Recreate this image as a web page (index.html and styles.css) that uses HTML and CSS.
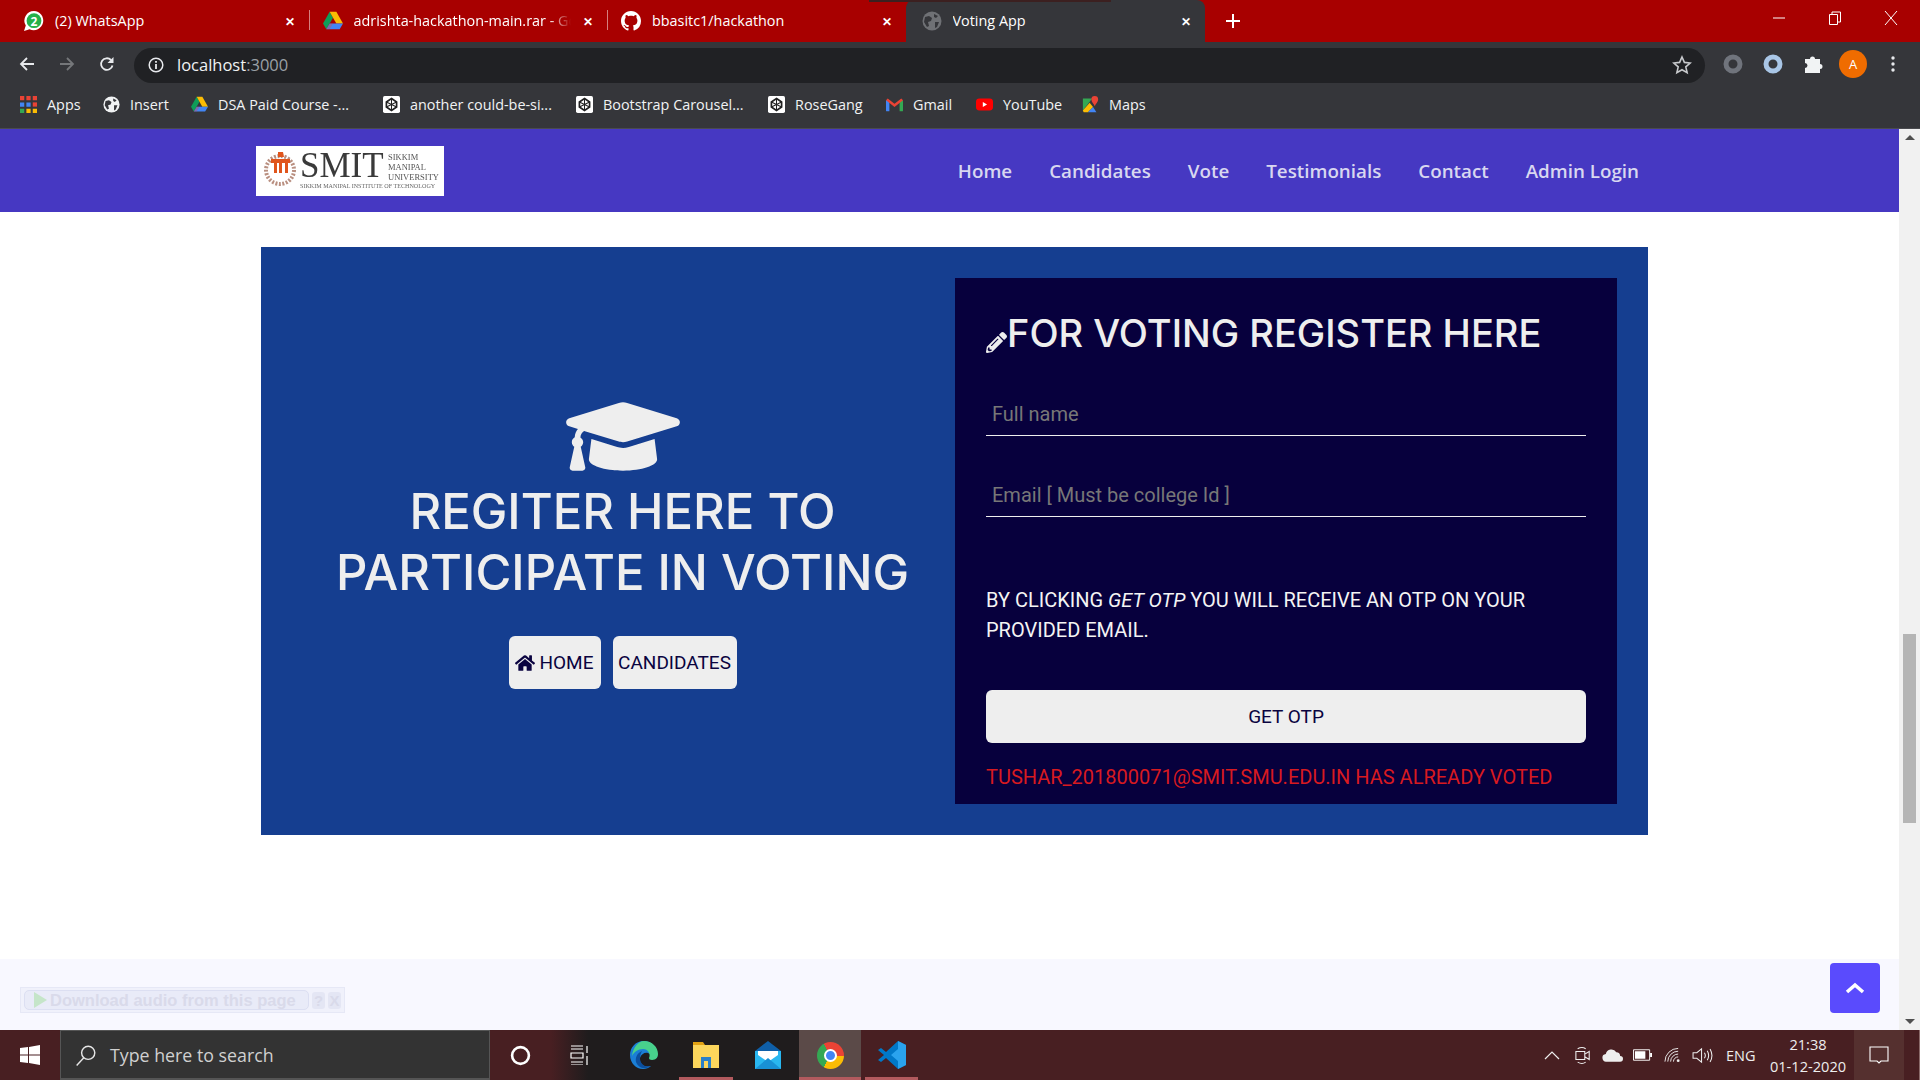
FILE: index.html
```html
<!DOCTYPE html>
<html lang="en">
<head>
  <meta charset="UTF-8" />
  <title>Voting App</title>
  <link rel="stylesheet" href="styles.css">
</head>
<body>
  <svg class="defs" width="0" height="0">
    <symbol id="drive" viewBox="0 0 24 22">
      <path fill="#0f9d58" d="M8 0 0 14l4 7 8-14z"/>
      <path fill="#fbbc04" d="M8 0h8l8 14h-8z"/>
      <path fill="#4285f4" d="M4 21l4-7h16l-4 7z"/>
      <path fill="#ea4335" d="M4 21l4-7h4l-4 7z" opacity=".35"/>
    </symbol>
    <symbol id="pen" viewBox="0 0 20 20">
      <rect width="20" height="20" rx="2" fill="#fff"/>
      <path d="M10 3l6 4v6l-6 4-6-4V7z" fill="none" stroke="#222" stroke-width="2"/>
      <path d="M10 3v14M4 7l12 6M16 7L4 13" stroke="#222" stroke-width="1.2"/>
    </symbol>
    <symbol id="globe" viewBox="0 0 20 20">
      <circle cx="10" cy="10" r="9.5" fill="currentColor"/>
      <path fill="#35363a" d="M3 6l4-1 3 2-1 3-3 1 1 4-2 1-3-5zM12 3l4 2-2 2-2-1zM13 11l4 0-2 5-2 1z"/>
    </symbol>
  </svg>

  <div class="screen">
    <div class="tabstrip">
      <div class="tab">
        <svg class="favicon" viewBox="0 0 20 20"><path fill="#fff" d="M10 0a9.6 9.6 0 0 0-8.2 14.6L0 20l5.6-1.7A9.6 9.6 0 1 0 10 0z"/><circle cx="10" cy="9.7" r="7.4" fill="#25b04a"/></svg>
        <span class="tab-num">2</span>
        <span class="tab-title">(2) WhatsApp</span>
        <span class="tab-close">✕</span>
      </div>
      <div class="tab">
        <svg class="favicon"><use href="#drive"/></svg>
        <span class="tab-title fade">adrishta-hackathon-main.rar - Go</span>
        <span class="tab-close">✕</span>
      </div>
      <div class="tab">
        <svg class="favicon" viewBox="0 0 16 16"><path fill="#fff" d="M8 0C3.58 0 0 3.58 0 8c0 3.54 2.29 6.53 5.47 7.59.4.07.55-.17.55-.38 0-.19-.01-.82-.01-1.49-2.01.37-2.53-.49-2.69-.94-.09-.23-.48-.94-.82-1.13-.28-.15-.68-.52-.01-.53.63-.01 1.08.58 1.23.82.72 1.21 1.87.87 2.33.66.07-.52.28-.87.51-1.07-1.78-.2-3.64-.89-3.64-3.95 0-.87.31-1.59.82-2.15-.08-.2-.36-1.02.08-2.12 0 0 .67-.21 2.2.82.64-.18 1.32-.27 2-.27.68 0 1.36.09 2 .27 1.53-1.04 2.2-.82 2.2-.82.44 1.1.16 1.92.08 2.12.51.56.82 1.27.82 2.15 0 3.07-1.87 3.75-3.65 3.95.29.25.54.73.54 1.48 0 1.07-.01 1.93-.01 2.2 0 .21.15.46.55.38A8.013 8.013 0 0016 8c0-4.42-3.58-8-8-8z"/></svg>
        <span class="tab-title">bbasitc1/hackathon</span>
        <span class="tab-close">✕</span>
      </div>
      <div class="tab active">
        <svg class="favicon dim"><use href="#globe"/></svg>
        <span class="tab-title">Voting App</span>
        <span class="tab-close">✕</span>
      </div>
      <svg class="newtab" viewBox="0 0 16 16"><path d="M8 1v14M1 8h14" stroke="#fff" stroke-width="2"/></svg>
      <div class="winctrls">
        <svg viewBox="0 0 14 14"><path d="M1 7h12" stroke="#fff"/></svg>
        <svg viewBox="0 0 14 14"><path d="M1.5 3.5h8v10h-8zM4 3.5V1h8.500v10h-3" fill="none" stroke="#fff"/></svg>
        <svg viewBox="0 0 14 14"><path d="M1 0l12 14M13 0L1 14" stroke="#fff"/></svg>
      </div>
    </div>

    <div class="toolbar">
      <svg class="tool" viewBox="0 0 16 16"><path d="M15 8H2M8 2 2 8l6 6" fill="none" stroke="#e8eaed" stroke-width="1.8"/></svg>
      <svg class="tool" viewBox="0 0 16 16"><path d="M1 8h13M8 2l6 6-6 6" fill="none" stroke="#75777a" stroke-width="1.8"/></svg>
      <svg class="tool" viewBox="0 0 16 16"><path d="M13.500 9.500A5.800 5.800 0 1 1 12 4" fill="none" stroke="#e8eaed" stroke-width="1.800"/><path d="M14.500 1v6h-6z" fill="#e8eaed"/></svg>
      <div class="omnibox">
        <svg class="info" viewBox="0 0 16 16"><circle cx="8" cy="8" r="6.800" fill="none" stroke="#e8eaed" stroke-width="1.500"/><path d="M8 7v5M8 4v1.800" stroke="#e8eaed" stroke-width="1.800"/></svg>
        <span class="url">localhost<span class="port">:3000</span></span>
        <svg class="star" viewBox="0 0 20 20"><path d="M10 2l2.400 5.400 5.800.6-4.400 3.900 1.300 5.700L10 14.700l-5.100 2.900 1.300-5.700L1.800 8l5.800-.6z" fill="none" stroke="#c8cacd" stroke-width="1.600"/></svg>
      </div>
      <div class="ext-icons">
        <svg viewBox="0 0 20 20"><circle cx="10" cy="10" r="7" fill="none" stroke="#70747c" stroke-width="5"/></svg>
        <svg viewBox="0 0 20 20"><circle cx="10" cy="10" r="7" fill="none" stroke="#a9c6e6" stroke-width="5"/></svg>
        <svg viewBox="0 0 20 20"><path fill="#f1f3f4" d="M2 5h5a2.500 2.500 0 0 1 5 0h5v5a2.500 2.500 0 0 1 0 5v4H2v-5a2.500 2.500 0 0 0 0-5z"/></svg>
        <span class="avatar">A</span>
        <svg viewBox="0 0 20 20"><circle cx="10" cy="4" r="1.700" fill="#e8eaed"/><circle cx="10" cy="10" r="1.700" fill="#e8eaed"/><circle cx="10" cy="16" r="1.700" fill="#e8eaed"/></svg>
      </div>
    </div>

    <div class="bookmarks">
      <a class="bm bm-apps">
        <svg viewBox="0 0 16 16">
          <path fill="#ea4335" d="M0 0h4v4H0zM6 0h4v4H6zM12 0h4v4h-4z"/>
          <path fill="#4285f4" d="M0 6h4v4H0zM6 6h4v4H6z"/><path fill="#ea4335" d="M12 6h4v4h-4z"/>
          <path fill="#34a853" d="M0 12h4v4H0z"/><path fill="#fbbc04" d="M6 12h4v4H6zM12 12h4v4h-4z"/>
        </svg>Apps</a>
      <a class="bm bm-insert"><svg class="light"><use href="#globe"/></svg>Insert</a>
      <a class="bm bm-dsa"><svg><use href="#drive"/></svg>DSA Paid Course -...</a>
      <a class="bm bm-another"><svg><use href="#pen"/></svg>another could-be-si...</a>
      <a class="bm bm-boot"><svg><use href="#pen"/></svg>Bootstrap Carousel...</a>
      <a class="bm bm-rose"><svg><use href="#pen"/></svg>RoseGang</a>
      <a class="bm bm-gmail">
        <svg viewBox="0 0 20 16"><path fill="#4285f4" d="M0 3h4v13H1a1 1 0 0 1-1-1z"/><path fill="#34a853" d="M16 3h4v12a1 1 0 0 1-1 1h-3z"/><path fill="#ea4335" d="M0 3l2-2 8 6 8-6 2 2-10 8z"/></svg>Gmail</a>
      <a class="bm bm-yt">
        <svg viewBox="0 0 20 20"><rect y="3" width="20" height="14" rx="4" fill="#f00"/><path d="M8 7l5 3-5 3z" fill="#fff"/></svg>YouTube</a>
      <a class="bm">
        <svg viewBox="0 0 20 20"><path fill="#34a853" d="M1 3h11L1 17z"/><path fill="#fbbc04" d="M1 17l8-9 4 5-6 6H2z"/><path fill="#4285f4" d="M7 19l6-6 4 6z"/><path fill="#ea4335" d="M15 0a4 4 0 0 1 4 4c0 3-3 5-4 8-1-3-4-5-4-8a4 4 0 0 1 4-4z"/></svg>Maps</a>
    </div>

    <div class="viewport">
      <div class="page">
        <nav class="navbar">
          <div class="logo">
            <svg viewBox="0 0 188 50" width="188" height="50">
              <circle cx="24" cy="24" r="14" fill="none" stroke="#b98f80" stroke-width="4" stroke-dasharray="2 1.500"/>
              <path fill="#e0551c" d="M22 6h5l1 5h-6zM15 13h19v4h-2v10h-3V17h-3v10h-3V17h-2v10h-3V17h-3z"/>
              <text class="logo-big" x="44" y="31">SMIT</text>
              <text class="logo-small" x="132" y="14">SIKKIM</text>
              <text class="logo-small" x="132" y="24">MANIPAL</text>
              <text class="logo-small" x="132" y="34">UNIVERSITY</text>
              <text class="logo-tiny" x="44" y="42">SIKKIM MANIPAL INSTITUTE OF TECHNOLOGY</text>
            </svg>
          </div>
          <ul class="nav-links">
            <li>Home</li>
            <li>Candidates</li>
            <li>Vote</li>
            <li>Testimonials</li>
            <li>Contact</li>
            <li>Admin Login</li>
          </ul>
        </nav>

        <main class="content">
          <section class="panel">
            <div class="intro">
              <svg class="cap" viewBox="0 0 640 512"><path d="M622.34 153.2L343.4 67.5c-15.2-4.67-31.6-4.67-46.79 0L17.66 153.2c-23.54 7.23-23.54 38.36 0 45.59l48.63 14.94c-10.67 13.19-17.23 29.28-17.88 46.9C38.78 266.15 32 276.11 32 288c0 10.78 5.68 19.85 13.86 25.65L20.33 428.53C18.11 438.52 25.71 448 35.94 448h56.11c10.24 0 17.84-9.48 15.62-19.47L82.14 313.65C90.32 307.85 96 298.78 96 288c0-11.57-6.47-21.25-15.66-26.87.76-15.02 8.44-28.3 20.69-36.72L296.6 284.5c9.06 2.78 26.44 6.25 46.79 0l278.95-85.7c23.55-7.24 23.55-38.36 0-45.6zM352.79 315.09c-28.53 8.76-52.84 3.92-65.59 0l-145.02-44.55L128 384c0 35.35 85.96 64 192 64s192-28.65 192-64l-14.18-113.47-145.03 44.56z"/></svg>
              <h1>REGITER HERE TO<br>PARTICIPATE IN VOTING</h1>
              <div class="intro-btns">
                <a class="btn btn-home">
                  <svg viewBox="0 0 576 512"><path d="M280.37 148.26L96 300.11V464a16 16 0 0 0 16 16l112.06-.29a16 16 0 0 0 15.92-16V368a16 16 0 0 1 16-16h64a16 16 0 0 1 16 16v95.64a16 16 0 0 0 16 16.05L464 480a16 16 0 0 0 16-16V300L295.67 148.26a12.19 12.19 0 0 0-15.3 0zM571.6 251.47L488 182.56V44.05a12 12 0 0 0-12-12h-56a12 12 0 0 0-12 12v72.61L318.47 43a48 48 0 0 0-61 0L4.34 251.47a12 12 0 0 0-1.6 16.9l25.5 31A12 12 0 0 0 45.15 301l235.22-193.74a12.19 12.19 0 0 1 15.3 0L530.9 301a12 12 0 0 0 16.9-1.6l25.5-31a12 12 0 0 0-1.7-16.93z"/></svg>
                  HOME</a>
                <a class="btn btn-cand">CANDIDATES</a>
              </div>
            </div>

            <form class="register">
              <h2>
                <svg viewBox="0 0 512 512"><path d="M497.9 142.1l-46.1 46.1c-4.7 4.7-12.3 4.7-17 0l-111-111c-4.7-4.7-4.7-12.3 0-17l46.1-46.1c18.7-18.7 49.1-18.7 67.9 0l60.1 60.1c18.8 18.7 18.8 49.1 0 67.9zM284.2 99.8L21.6 362.4.4 483.9c-2.9 16.4 11.4 30.6 27.8 27.8l121.5-21.3 262.6-262.6c4.7-4.7 4.7-12.3 0-17l-111-111c-4.8-4.7-12.4-4.7-17.1 0zM124.1 339.9c-5.5-5.5-5.5-14.3 0-19.8l154-154c5.5-5.5 14.3-5.5 19.8 0s5.5 14.3 0 19.8l-154 154c-5.5 5.5-14.3 5.5-19.800 0zM88 424h48v36.3l-64.5 11.3-31.1-31.1L51.7 376H88v48z"/></svg>FOR VOTING REGISTER HERE
              </h2>
              <input class="field" type="text" placeholder="Full name">
              <input class="field" type="email" placeholder="Email [ Must be college Id ]">
              <p class="note">BY CLICKING <em>GET OTP</em> YOU WILL RECEIVE AN OTP ON YOUR PROVIDED EMAIL.</p>
              <button class="otp" type="button">GET OTP</button>
              <p class="voted">TUSHAR_201800071@SMIT.SMU.EDU.IN HAS ALREADY VOTED</p>
            </form>
          </section>
        </main>

        <footer class="footer"></footer>

        <div class="audio-bar">
          <span class="audio-main"><i class="play"></i>Download audio from this page</span>
          <span class="audio-mini">?</span>
          <span class="audio-mini">X</span>
        </div>
        <a class="to-top"><svg viewBox="0 0 20 12"><path d="M2 10l8-7 8 7" fill="none" stroke="#fff" stroke-width="3.500"/></svg></a>
      </div>

      <div class="scrollbar">
        <i class="arrow-up"></i>
        <div class="track"><div class="thumb"></div></div>
        <i class="arrow-down"></i>
      </div>
    </div>

    <div class="taskbar">
      <div class="start">
        <svg viewBox="0 0 20 20"><path fill="#fff" d="M0 3l8-1v7.500H0zM9 2l11-2v9.500H9zM0 10.500h8V18l-8-1zM9 10.500h11V20L9 18z"/></svg>
      </div>
      <div class="search">
        <svg viewBox="0 0 20 20"><circle cx="12" cy="8" r="6" fill="none" stroke="#e6e6e6" stroke-width="1.300"/><path d="M8 12.500 1.500 19.500" stroke="#e6e6e6" stroke-width="1.300"/></svg>
        <span>Type here to search</span>
      </div>
      <div class="tb-slot">
        <svg class="tb-cortana" viewBox="0 0 20 20"><circle cx="10" cy="10" r="8" fill="none" stroke="#fff" stroke-width="2.500"/></svg>
      </div>
      <div class="tb-apps">
        <div class="tb-slot">
          <svg class="tb-view" viewBox="0 0 20 20"><path d="M2 1h12M2 4h12M2 8h12v5H2zM2 17h12M2 20h12M18 1v7M18 11v9" fill="none" stroke="#fff" stroke-width="1.200"/></svg>
        </div>
        <div class="tb-slot">
          <svg class="big" viewBox="0 0 30 30"><path fill="#1b7fd6" d="M15 1C6 1 1 8 1 15c0 8 6 14 13 14 3 0 6-1 8-3-8 2-12-3-11-8 1-4 5-6 8-5 3 1 4 3 3 5h6c2-7-3-17-13-17z"/><path fill="#48d18c" d="M15 1c8 0 14 6 14 13 0 3-2 6-6 6-2 0-3-1-3-2 2-4-1-9-6-9-5 0-9 3-11 7C4 8 9 1 15 1z"/><path fill="#0c4f9e" d="M11 18c0 6 5 10 11 8-6 4-13 2-15-4-1-4 1-9 6-11-1 2-2 4-2 7z"/></svg>
        </div>
        <div class="tb-slot running">
          <svg class="big" viewBox="0 0 30 30"><path fill="#e2a213" d="M2 2h10l2 3H2z"/><path fill="#fcd65c" d="M2 5h26v23H2z"/><path fill="#2a80c9" d="M10 17h10v11h-3v-7h-4v7h-3z"/></svg>
        </div>
        <div class="tb-slot">
          <svg class="big" viewBox="0 0 30 30"><path fill="#0f5fa8" d="M15 1 2 11l13 9 13-9z"/><path fill="#29b7f0" d="M2 11h26v18H2z"/><path fill="#fff" d="M5 11h20v4l-10 7-10-7z"/><path fill="#1891d6" d="M2 29 15 18l13 11z"/></svg>
        </div>
        <div class="tb-slot running active">
          <div class="chrome"><i></i></div>
        </div>
      </div>
      <div class="tb-slot running vscode">
        <svg class="big" viewBox="0 0 30 30"><path fill="#0078c8" d="M21 1l8 4v20l-8 4L9 18l-5 4-3-2 6-5-6-5 3-2 5 4z"/><path fill="#2aa3ee" d="M21 1l8 4v20l-8 4zM21 9l-7 6 7 6z"/></svg>
      </div>
      <div class="tray">
        <svg class="t-chev" viewBox="0 0 16 10"><path d="M1 9l7-7 7 7" fill="none" stroke="#eee" stroke-width="1.200"/></svg>
        <svg class="t-meet" viewBox="0 0 18 20"><path d="M1 6h10v9H1zM11 9l5-3v9l-5-3M3 3q5-3 9 0M3 18q5 3 9 0" fill="none" stroke="#eee" stroke-width="1.200"/></svg>
        <svg class="t-cloud" viewBox="0 0 22 14"><path fill="#eee" d="M5 14a4 4 0 0 1-1-8 6 6 0 0 1 11-2 4 4 0 0 1 4 4 3 3 0 0 1 0 6z"/></svg>
        <svg class="t-batt" viewBox="0 0 20 12"><path d="M.5.500h17v11H.5z" fill="none" stroke="#fff"/><path d="M2 2h11v8H2zM18 4h2v4h-2z" fill="#fff"/></svg>
        <svg class="t-wifi" viewBox="0 0 18 16"><path d="M1 15A14 14 0 0 1 15 1M4 15A11 11 0 0 1 15 4M7 15a8 8 0 0 1 8-8M10 15a5 5 0 0 1 5-5" fill="none" stroke="#eee"/><circle cx="15" cy="14" r="1.500" fill="#eee"/></svg>
        <svg class="t-vol" viewBox="0 0 22 18"><path d="M1 6h4l5-4v14l-5-4H1zM13 6q2 3 0 6M16 4q3 5 0 10M19 2q4 7 0 14" fill="none" stroke="#eee" stroke-width="1.100"/></svg>
        <span class="t-lang">ENG</span>
        <span class="t-clock">21:38<br>01-12-2020</span>
        <div class="t-action">
          <svg viewBox="0 0 20 20"><path d="M1 2h18v14h-7l-2 2-2-2H1z" fill="none" stroke="#fff" stroke-width="1.100"/></svg>
        </div>
        <div class="t-peek"></div>
      </div>
    </div>
  </div>
</body>
</html>
```

FILE: styles.css
```css
* {
  box-sizing: border-box;
}
html, body {
  margin: 0;
  height: 100%;
  overflow: hidden;
}
body {
  font-family: "Roboto", "Liberation Sans", sans-serif;
  background-color: #fff;
}
.defs {
  position: absolute;
}
.screen {
  width: 1920px;
  height: 1080px;
  display: flex;
  flex-direction: column;
}

/* browser tabs */
.tabstrip {
  height: 42px;
  background-color: #a80000;
  display: flex;
  align-items: center;
  padding-left: 10px;
  color: #fff;
  font-family: "Open Sans", "Noto Sans", sans-serif;
  font-size: 14px;
  flex: none;
  position: relative;
}
.tab {
  width: 298.500px;
  height: 42px;
  display: flex;
  align-items: center;
  padding: 0 12px 0 14px;
  position: relative;
}
.tab + .tab::before {
  content: "";
  position: absolute;
  left: 0;
  top: 10px;
  height: 20px;
  border-left: 1px solid #d5807f;
}
.tab.active {
  background-color: #35363a;
  border-radius: 8px 8px 0 0;
  width: 299px;
  padding-left: 16px;
}
.tab.active::before {
  display: none;
}
.tab.active::after {
  content: "";
  position: absolute;
  left: -37px;
  top: 0;
  width: 242px;
  height: 2px;
  background-color: #3c2020;
}
.favicon {
  width: 20px;
  height: 20px;
  flex: none;
  margin-right: 11px;
}
.favicon.dim {
  color: #6f7175;
}
.tab-num {
  position: absolute;
  left: 14px;
  width: 20px;
  text-align: center;
  font-size: 12px;
  font-weight: 700;
  color: #fff;
}
.tab-title {
  flex: 1;
  white-space: nowrap;
  overflow: hidden;
  font-size: 14.400px;
  margin-bottom: 2px;
}
.tab-title.fade {
  -webkit-mask-image: linear-gradient(to right, #000 90%, transparent);
  mask-image: linear-gradient(to right, #000 90%, transparent);
}
.tab-close {
  width: 14px;
  margin-left: 10px;
  font-size: 12px;
  text-align: center;
  font-weight: 700;
}
.newtab {
  width: 16px;
  height: 16px;
  margin-left: 20px;
}
.winctrls {
  margin-left: auto;
  display: flex;
  gap: 42px;
  padding-right: 22px;
  padding-bottom: 6px;
}
.winctrls svg {
  width: 14px;
  height: 14px;
}

/* toolbar */
.toolbar {
  height: 41px;
  background-color: #35363a;
  display: flex;
  align-items: center;
  padding-left: 19px;
  flex: none;
}
.tool {
  width: 16px;
  height: 16px;
  margin-right: 24px;
  margin-top: 2px;
  flex: none;
}
.omnibox {
  margin-left: -5px;
  width: 1571px;
  height: 35px;
  margin-top: 5px;
  background-color: #202124;
  border-radius: 18px;
  display: flex;
  align-items: center;
  padding: 0 13px 0 14px;
  font-family: "Open Sans", "Noto Sans", sans-serif;
}
.info {
  width: 16px;
  height: 16px;
  margin-right: 13px;
}
.url {
  font-size: 16.500px;
  color: #f1f3f4;
  flex: 1;
  margin-bottom: 2px;
}
.port {
  color: #9aa0a6;
}
.star {
  width: 20px;
  height: 20px;
}
.ext-icons {
  display: flex;
  align-items: center;
  padding-left: 18px;
  gap: 20px;
  margin-top: 3px;
}
.ext-icons svg {
  width: 20px;
  height: 20px;
}
.avatar {
  width: 28px;
  height: 28px;
  margin: 0 -4px;
  border-radius: 50%;
  background-color: #ef6c00;
  color: #fff;
  font: 13px "Open Sans", sans-serif;
  display: flex;
  align-items: center;
  justify-content: center;
}

/* bookmarks */
.bookmarks {
  height: 46px;
  padding: 0 0 2px 20px;
  background-color: #35363a;
  display: flex;
  align-items: center;
  color: #f1f3f4;
  font-family: "Open Sans", "Noto Sans", sans-serif;
  font-size: 14.400px;
  border-bottom: 1px solid #4a4b4f;
  flex: none;
}
.bm {
  display: flex;
  align-items: center;
  white-space: nowrap;
}
.bm svg {
  width: 17px;
  height: 17px;
  margin-right: 10px;
  flex: none;
}
.bm svg.light {
  color: #f1f3f4;
}
.bm-apps { width: 83px; }
.bm-insert { width: 88px; }
.bm-dsa { width: 192px; }
.bm-another { width: 193px; }
.bm-boot { width: 192px; }
.bm-rose { width: 118px; }
.bm-gmail { width: 90px; }
.bm-yt { width: 106px; }

/* page */
.viewport {
  flex: 1;
  display: flex;
  min-height: 0;
}
.page {
  flex: 1;
  display: flex;
  flex-direction: column;
  position: relative;
}
.navbar {
  height: 83px;
  background-color: #4638c2;
  display: flex;
  align-items: center;
  padding-left: 256px;
  flex: none;
}
.logo {
  width: 188px;
  height: 50px;
  background-color: #fff;
  filter: blur(.4px);
}
.logo-big {
  font: 35px "Liberation Serif", serif;
  fill: #3a3a3a;
}
.logo-small {
  font: 8.500px "Liberation Serif", serif;
  fill: #555;
}
.logo-tiny {
  font: 6.100px "Liberation Serif", serif;
  fill: #666;
}
.nav-links {
  list-style: none;
  margin: 0 0 0 auto;
  padding: 0 260px 0 0;
  display: flex;
  gap: 37px;
  font-family: "Open Sans", "Noto Sans", sans-serif;
  font-weight: 600;
  font-size: 18.800px;
  color: #d8d7f0;
}
.content {
  flex: 1;
  padding: 35px 0 0 261px;
}
.panel {
  width: 1387px;
  height: 588px;
  padding: 31px;
  background-color: #153e90;
  display: flex;
}
.intro {
  flex: 1;
  display: flex;
  flex-direction: column;
  align-items: center;
  justify-content: center;
  padding: 0 2px 2px 0;
  color: #eeeeee;
}
.cap {
  width: 114px;
  height: 91px;
  fill: #eeeeee;
  flex: none;
}
.intro h1 {
  margin: -1px 0 33px;
  font-family: "Inter", "Open Sans", sans-serif;
  font-weight: 500;
  font-size: 49px;
  line-height: 61px;
  text-align: center;
  white-space: nowrap;
}
.intro-btns {
  display: flex;
  gap: 12px;
}
.btn {
  height: 53px;
  background-color: #eeeeee;
  color: #0a0340;
  border-radius: 6px;
  font-size: 19px;
  display: flex;
  align-items: center;
  justify-content: center;
}
.btn-home {
  width: 92px;
  gap: 4px;
}
.btn-home svg {
  width: 20px;
  height: 18px;
  fill: #0a0340;
}
.btn-cand {
  width: 124px;
}
.register {
  width: 662px;
  padding: 0 31px;
  background-color: #07003d;
  color: #eeeeee;
  flex: none;
}
.register h2 {
  margin: 0;
  padding-top: 28px;
  height: 103px;
  font-family: "Inter", "Open Sans", sans-serif;
  font-weight: 500;
  font-size: 38px;
  line-height: 54px;
  white-space: nowrap;
}
.register h2 svg {
  width: 21px;
  height: 21px;
  fill: #eeeeee;
  vertical-align: -6px;
}
.field {
  display: block;
  width: 600px;
  height: 55px;
  padding: 11px 6px 0;
  margin-bottom: 26px;
  border: 0;
  border-bottom: 1.500px solid #eeeeee;
  background: transparent;
  font: 20px "Roboto", sans-serif;
  color: #eee;
}
.field::placeholder {
  color: #777777;
  opacity: 1;
}
.field:last-of-type {
  margin-bottom: 0;
}
.note {
  margin: 68px 0 0;
  height: 60px;
  font-size: 20px;
  line-height: 30px;
  color: #f4f4f4;
}
.otp {
  display: block;
  width: 600px;
  height: 53px;
  margin-top: 45px;
  padding-bottom: 2px;
  border: none;
  border-radius: 6px;
  background-color: #eeeeee;
  color: #0a0340;
  font: 19px "Roboto", sans-serif;
}
.voted {
  margin: 21px 0 0;
  font-size: 20px;
  line-height: 26px;
  color: #d81a20;
  white-space: nowrap;
}
.footer {
  height: 71px;
  flex: none;
  background-color: #f8f8ff;
}
.audio-bar {
  position: absolute;
  left: 20px;
  top: 858px;
  width: 325px;
  height: 26px;
  display: flex;
  align-items: center;
  gap: 3px;
  padding: 0 3px;
  background-color: #f0f1fb;
  border: 1px solid #e6e8f6;
  font-family: "Liberation Sans", sans-serif;
  font-weight: 700;
  color: #d9daea;
}
.audio-main {
  width: 286px;
  height: 20px;
  display: flex;
  align-items: center;
  background-color: #e9ebf8;
  border: 1px solid #dcdff2;
  border-radius: 5px;
  font-size: 16.500px;
  white-space: nowrap;
}
.play {
  width: 0;
  height: 0;
  margin: 0 3px 0 9px;
  border-left: 13px solid #c5e5c9;
  border-top: 8px solid transparent;
  border-bottom: 8px solid transparent;
}
.audio-mini {
  width: 13px;
  font-size: 15px;
  text-align: center;
  background-color: #e4e6f4;
  border-radius: 3px;
}
.to-top {
  position: absolute;
  left: 1830px;
  top: 834px;
  width: 50px;
  height: 50px;
  border-radius: 4px;
  background-color: #5a4bfd;
  display: flex;
  align-items: center;
  justify-content: center;
}
.to-top svg {
  width: 20px;
  height: 12px;
}

/* scrollbar */
.scrollbar {
  width: 21px;
  flex: none;
  background-color: #f1f1f1;
  display: flex;
  flex-direction: column;
  align-items: center;
}
.track {
  flex: 1;
  width: 100%;
  padding: 488px 4px 0;
}
.thumb {
  height: 189px;
  background-color: #b5b5b5;
}
.arrow-up, .arrow-down {
  width: 0;
  height: 0;
  margin: 6px 0;
  border-left: 5px solid transparent;
  border-right: 5px solid transparent;
}
.arrow-up {
  border-bottom: 5px solid #505050;
}
.arrow-down {
  border-top: 5px solid #505050;
}

/* windows taskbar */
.taskbar {
  height: 50px;
  background-color: #481f22;
  display: flex;
  align-items: center;
  color: #f0f0f0;
  font-family: "Open Sans", "Noto Sans", sans-serif;
  flex: none;
}
.start {
  width: 60px;
  display: flex;
  justify-content: center;
}
.start svg {
  width: 20px;
  height: 20px;
}
.search {
  width: 430px;
  height: 50px;
  background-color: #333333;
  border: 1px solid #555555;
  border-bottom-width: 2px;
  display: flex;
  align-items: center;
  padding-left: 14px;
  font-size: 17.800px;
  color: #d0d0d0;
}
.search svg {
  width: 22px;
  height: 22px;
  margin-right: 13px;
}
.tb-slot {
  width: 61px;
  height: 50px;
  flex: none;
  display: flex;
  align-items: center;
  justify-content: center;
  position: relative;
}
.tb-slot svg {
  width: 20px;
  height: 20px;
}
.tb-slot svg.big {
  width: 30px;
  height: 30px;
}
.tb-slot svg.tb-cortana {
  width: 21px;
  height: 21px;
}
.tb-slot svg.tb-view {
  margin-right: 6px;
}
.tb-apps {
  display: flex;
  background: linear-gradient(to right, #481f22 0, #1f1c1d 12%);
  width: 310px;
  height: 50px;
}
.tb-apps .tb-slot {
  width: 62px;
}
.tb-slot.running::after {
  content: "";
  position: absolute;
  left: 4px;
  right: 4px;
  bottom: 0;
  height: 3px;
  background-color: #b25a5e;
}
.tb-slot.active {
  background-color: #5b4a48;
}
.tb-slot.active::after {
  left: 0;
  right: 0;
}
.chrome {
  width: 27px;
  height: 27px;
  border-radius: 50%;
  background: conic-gradient(from -30deg, #ea4335 0 120deg, #fbbc04 120deg 240deg, #34a853 240deg 360deg);
  display: flex;
  align-items: center;
  justify-content: center;
}
.chrome i {
  width: 13px;
  height: 13px;
  border-radius: 50%;
  background-color: #4285f4;
  border: 2px solid #fff;
}
.tray {
  margin-left: auto;
  display: flex;
  align-items: center;
  height: 50px;
  font-size: 14px;
  color: #eee;
}
.tray svg {
  flex: none;
}
.t-chev { width: 16px; height: 10px; margin-right: 15px; }
.t-meet { width: 16px; height: 18px; margin-right: 11px; }
.t-cloud { width: 21px; height: 14px; margin-right: 10px; }
.t-batt { width: 19px; height: 12px; margin-right: 12px; }
.t-wifi { width: 17px; height: 16px; margin-right: 11px; }
.t-vol { width: 21px; height: 17px; margin-right: 13px; }
.t-lang { width: 33px; margin-right: 3px; font-size: 14.500px; }
.t-clock {
  width: 92px;
  text-align: center;
  line-height: 22px;
  font-size: 14.600px;
}
.t-action {
  width: 50px;
  height: 50px;
  background-color: #55302f;
  display: flex;
  align-items: center;
  justify-content: center;
}
.t-action svg {
  width: 20px;
  height: 20px;
}
.t-peek {
  width: 16px;
  height: 50px;
  border-right: 1px solid #8a6a6a;
}
```
